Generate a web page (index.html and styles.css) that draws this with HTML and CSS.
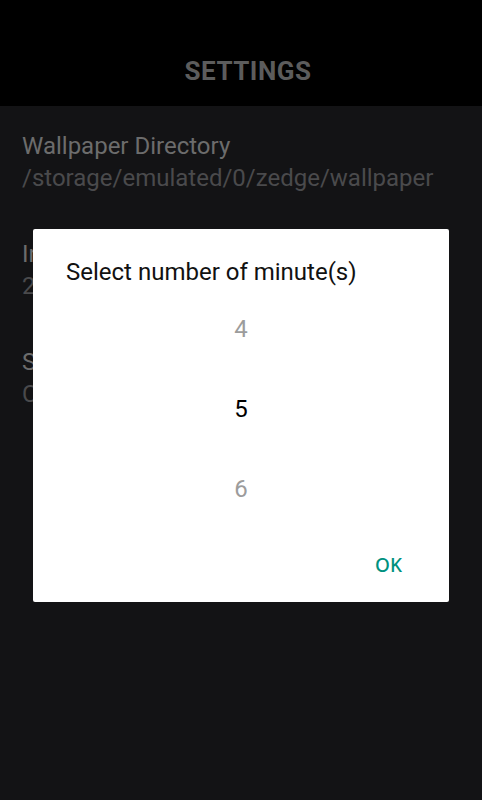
FILE: index.html
```html
<!DOCTYPE html>
<html lang="en">
<head>
  <meta charset="UTF-8">
  <title>Settings</title>
  <link rel="stylesheet" href="styles.css">
</head>
<body>
  <header class="topbar">SETTINGS</header>

  <ul class="prefs">
    <li class="pref">
      <div class="pref-title">Wallpaper Directory</div>
      <div class="pref-value">/storage/emulated/0/zedge/wallpaper</div>
    </li>
    <li class="pref">
      <div class="pref-title">Interval</div>
      <div class="pref-value">2 minute(s)</div>
    </li>
    <li class="pref">
      <div class="pref-title">Shuffle</div>
      <div class="pref-value">Change wallpaper in random order</div>
    </li>
  </ul>

  <div class="dialog">
    <div class="dialog-title">Select number of minute(s)</div>
    <div class="picker">
      <div class="pick">4</div>
      <div class="pick current">5</div>
      <div class="pick">6</div>
    </div>
    <div class="actions">
      <button class="btn">OK</button>
    </div>
  </div>
</body>
</html>
```

FILE: styles.css
```css
body {
  margin: 0;
  background: #131315;
  font-family: Roboto, 'Noto Sans', sans-serif;
  height: 800px;
  overflow: hidden;
  position: relative;
}
.topbar {
  height: 106px;
  background: #000;
  color: #5c5c5c;
  font-size: 26px;
  font-weight: bold;
  letter-spacing: 0.5px;
  display: flex;
  align-items: center;
  justify-content: center;
  padding: 36px 0 0 14px;
  box-sizing: border-box;
}
.prefs {
  list-style: none;
  margin: 0;
  padding: 24px 0 0 22px;
  display: flex;
  flex-direction: column;
  gap: 44px;
}
.pref-title,
.pref-value {
  font-size: 24px;
  line-height: 32px;
  white-space: nowrap;
}
.pref-title {
  color: #6c6c6c;
}
.pref-value {
  color: #4a4a4c;
}
.dialog {
  position: absolute;
  left: 33px;
  top: 229px;
  width: 416px;
  height: 373px;
  background: #fff;
  border-radius: 2px;
  display: flex;
  flex-direction: column;
  box-sizing: border-box;
  padding-top: 29px;
}
.dialog-title {
  font-size: 24px;
  line-height: 28px;
  color: #111;
  padding-left: 33px;
  white-space: nowrap;
}
.picker {
  margin-top: 3px;
}
.pick {
  height: 80px;
  line-height: 80px;
  text-align: center;
  font-size: 24px;
  color: #9c9c9c;
}
.pick.current {
  color: #000;
}
.actions {
  display: flex;
  justify-content: flex-end;
  margin-top: 18px;
  padding-right: 47px;
}
.btn {
  border: none;
  background: none;
  padding: 0;
  font-family: 'Noto Sans', sans-serif;
  font-size: 19px;
  font-weight: 500;
  line-height: 36px;
  color: #00917f;
}
```
